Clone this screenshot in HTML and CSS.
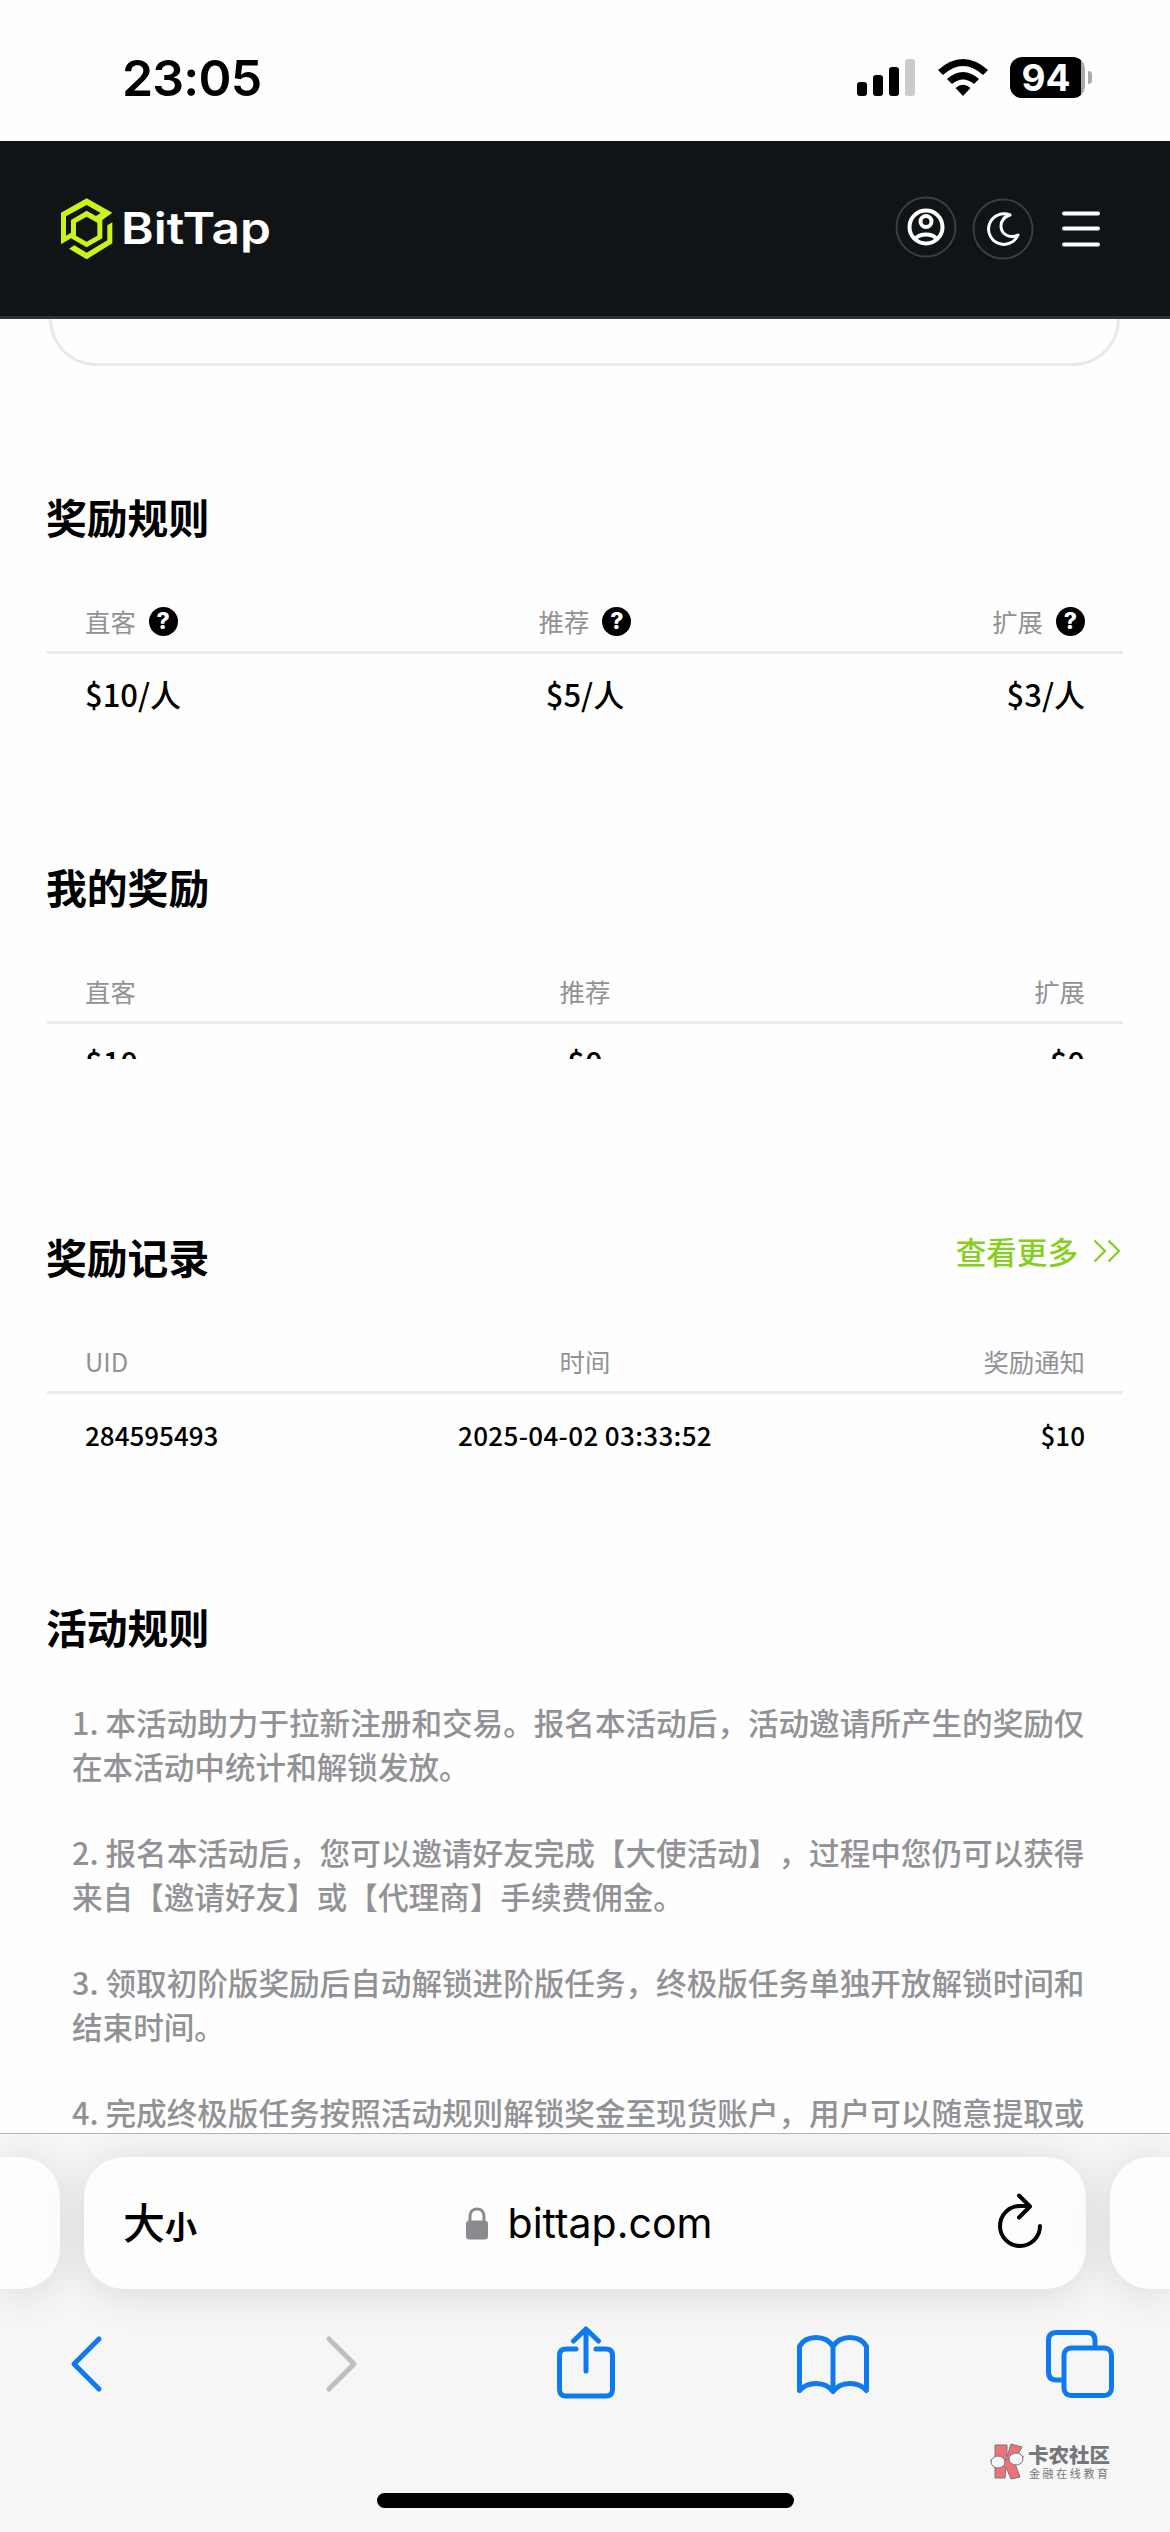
FILE: index.html
```html
<!DOCTYPE html>
<html lang="zh-CN">
<head>
  <meta charset="UTF-8">
  <meta name="viewport" content="width=device-width, initial-scale=1.0">
  <title>BitTap</title>
  <link rel="stylesheet" href="styles.css">
</head>
<body>
  <div class="status">
    <span class="time">23:05</span>
    <div class="status-icons">
      <svg class="signal" width="58" height="37" viewBox="0 0 58 37">
        <rect x="0" y="23" width="10" height="14" rx="3"/>
        <rect x="16" y="16" width="10" height="21" rx="3"/>
        <rect x="32" y="8" width="10" height="29" rx="3"/>
        <rect x="48" y="0" width="10" height="37" rx="3" fill="#cbcbcb"/>
      </svg>
      <svg class="wifi" width="50" height="37" viewBox="0 0 50 37">
        <path d="M0 11 Q25 -11 50 11 L45 16 Q25 -2 5 16Z"/>
        <path d="M9 20 Q25 6 41 20 L36 25 Q25 16 14 25Z"/>
        <path d="M17.500 29 Q25 22.500 32.500 29 L25 37Z"/>
      </svg>
      <div class="battery">94</div>
      <span class="battery-cap"></span>
    </div>
  </div>

  <header class="navbar">
    <svg class="logo" width="220" height="80" viewBox="0 0 220 80">
      <g fill="#cdf31c" transform="scale(0.3333)">
        <path d="M33 163V68L110 25L187 68L157 90V145L110 172L63 145L33 163ZM48 137L63 128V90L110 62L138 78L152 69L110 45L48 79ZM110 80L78 98V137L110 155L142 137V98Z" fill-rule="evenodd"/>
        <path d="M187 97V160L110 208L57 176L73 166L110 188L172 151V106Z"/>
      </g>
      <text x="71" y="54" textLength="150" lengthAdjust="spacingAndGlyphs">BitTap</text>
    </svg>
    <div class="nav-icons">
      <svg class="user" width="62" height="62" viewBox="0 0 62 62" fill="none" stroke="#fff" stroke-width="4">
        <circle cx="31" cy="31" r="29.500" stroke="#3b3d40" stroke-width="2"/>
        <circle cx="31" cy="31" r="16.500"/>
        <circle cx="31" cy="25.500" r="5.500"/>
        <path d="M20 43C25 37 37 37 42 43"/>
      </svg>
      <svg class="moon" width="62" height="62" viewBox="0 0 62 62" fill="none" stroke="#fff" stroke-width="3" stroke-linejoin="round">
        <circle cx="31" cy="31" r="29.500" stroke="#3b3d40" stroke-width="2"/>
        <path d="M38 17A15.300 15.300 0 1 0 46 37C37 41 29 36 29 28C29 23 32 19 38 17Z"/>
      </svg>
      <svg class="menu" width="40" height="38" viewBox="0 0 40 38" stroke="#fff" stroke-width="4" stroke-linecap="round">
        <path d="M3 3.500H37M3 18.500H37M3 34.500H37"/>
      </svg>
    </div>
  </header>

  <main class="content">
    <div class="card"></div>

    <section class="block">
      <h2>奖励规则</h2>
      <div class="row head">
        <span>直客 <i class="help">?</i></span>
        <span>推荐 <i class="help">?</i></span>
        <span>扩展 <i class="help">?</i></span>
      </div>
      <div class="row value">
        <span>$10/人</span>
        <span>$5/人</span>
        <span>$3/人</span>
      </div>
    </section>

    <section class="block">
      <h2>我的奖励</h2>
      <div class="row head">
        <span>直客</span>
        <span>推荐</span>
        <span>扩展</span>
      </div>
      <!-- only the top of the amounts shows -->
      <div class="clip">
        <div class="row value">
          <span>$10</span>
          <span>$0</span>
          <span>$0</span>
        </div>
      </div>
    </section>

    <section class="block">
      <div class="title-line">
        <h2>奖励记录</h2>
        <a class="more">查看更多
          <svg width="28" height="24" viewBox="0 0 28 24" fill="none" stroke="#86cf21" stroke-width="2.200">
            <path d="M1.500 1.500L12 12L1.500 22.500M15.500 1.500L26 12L15.500 22.500"/>
          </svg>
        </a>
      </div>
      <div class="row head">
        <span>UID</span>
        <span>时间</span>
        <span>奖励通知</span>
      </div>
      <div class="row value small">
        <span>284595493</span>
        <span class="date">2025-04-02 03:33:52</span>
        <span>$10</span>
      </div>
    </section>

    <section class="rules">
      <h2>活动规则</h2>
      <p>1. 本活动助力于拉新注册和交易。报名本活动后，活动邀请所产生的奖励仅<br>在本活动中统计和解锁发放。</p>
      <p>2. 报名本活动后，您可以邀请好友完成【大使活动】，过程中您仍可以获得<br>来自【邀请好友】或【代理商】手续费佣金。</p>
      <p>3. 领取初阶版奖励后自动解锁进阶版任务，终极版任务单独开放解锁时间和<br>结束时间。</p>
      <p>4. 完成终极版任务按照活动规则解锁奖金至现货账户，用户可以随意提取或</p>
    </section>
  </main>

  <footer class="browser">
    <div class="tabs">
      <div class="tab side"></div>
      <div class="tab address">
        <span class="size">大<small>小</small></span>
        <div class="url">
          <svg width="22" height="33" viewBox="0 0 22 33">
            <path d="M4 15V9C4 -0.500 18 -0.500 18 9V15" fill="none" stroke="#8a8a8f" stroke-width="3"/>
            <rect x="0" y="13.500" width="22" height="19" rx="3.500" fill="#8a8a8f"/>
          </svg>
          <span>bittap.com</span>
        </div>
        <svg class="reload" width="46" height="56" viewBox="0 0 46 56" fill="none" stroke="#000" stroke-width="4" stroke-linecap="round" stroke-linejoin="round">
          <path d="M43 33A20 20 0 1 1 23 13H32M22 2.500L33 13.500L22 24.500"/>
        </svg>
      </div>
      <div class="tab side"></div>
    </div>
    <div class="toolbar">
      <svg class="back" width="34" height="58" viewBox="0 0 34 58"><path d="M30 4L5 29L30 54"/></svg>
      <svg class="forward" width="34" height="58" viewBox="0 0 34 58"><path d="M4 4L29 29L4 54"/></svg>
      <svg class="share" width="58" height="76" viewBox="0 0 58 76"><path d="M19 23H9Q2.500 23 2.500 29.500V63.500Q2.500 70 9 70H49Q55.500 70 55.500 63.500V29.500Q55.500 23 49 23H39M29 45V3M16.500 15L29 3L41.500 15"/></svg>
      <svg class="book" width="72" height="62" viewBox="0 0 72 62"><path d="M36 13.500C29 1.500 9 1.500 2.500 13.500V57.500C11 48 28 48 36 58.500C44 48 61 48 69.500 57.500V13.500C63 1.500 43 1.500 36 13.500V58"/></svg>
      <svg class="pages" width="68" height="68" viewBox="0 0 68 68"><path d="M17 50H10.500Q2.500 50 2.500 42V10.500Q2.500 2.500 10.500 2.500H41Q49 2.500 49 10.500V17"/><rect x="18" y="18" width="47.500" height="47.500" rx="7"/></svg>
    </div>
    <div class="home-bar"></div>
    <div class="mark">
      <svg width="36" height="38" viewBox="0 0 36 38" stroke="#77777a" stroke-width="1">
        <path d="M6 2H18V14L22 1L33 4L25 18L31 34L22 36L17 24L16 35H6Z" fill="#ed7379"/>
        <ellipse cx="9" cy="19" rx="7" ry="6" fill="#f6f6f6"/>
        <ellipse cx="27" cy="16" rx="7" ry="6" fill="#f6f6f6"/>
        <path d="M1 17H2M15 17L20 16M33 14L35 13" fill="none"/>
      </svg>
      <div>
        <b>卡农社区</b>
        <small>金融在线教育</small>
      </div>
    </div>
  </footer>
</body>
</html>
```
FILE: styles.css
```css
* {
  box-sizing: border-box;
}
body {
  width: 1170px;
  height: 2532px;
  margin: 0;
  overflow: hidden;
  display: flex;
  flex-direction: column;
  background-color: #fefefe;
  color: #000;
  font-family: "Noto Sans CJK SC", sans-serif;
  text-spacing-trim: space-all;
}
svg {
  display: block;
  flex: none;
}

/* status bar */
.status {
  flex: none;
  height: 141px;
  padding: 14px 78px 0 122px;
  display: flex;
  align-items: center;
  justify-content: space-between;
  font-family: Inter, sans-serif;
}
.time {
  font-size: 50px;
  font-weight: 600;
  letter-spacing: -0.800px;
}
.status-icons {
  display: flex;
  align-items: center;
}
.wifi {
  margin-left: 23px;
}
.battery {
  width: 75px;
  height: 41px;
  margin-left: 22px;
  padding-right: 3px;
  border-radius: 12px;
  background: linear-gradient(to right, #000 71px, #aaa 71px);
  color: #fff;
  font-size: 37px;
  font-weight: 700;
  line-height: 41px;
  text-align: center;
}
.battery-cap {
  width: 4px;
  height: 13px;
  margin-left: 3px;
  border-radius: 0 5px 5px 0;
  background-color: #aaa;
}

/* site header */
.navbar {
  flex: none;
  height: 178px;
  padding: 0 69px 0 50px;
  display: flex;
  align-items: center;
  justify-content: space-between;
  background-color: #101416;
  border-bottom: 3px solid #313136;
}
.logo {
  margin-top: 3px;
}
.logo text {
  fill: #fff;
  font-family: Inter, sans-serif;
  font-size: 44px;
  font-weight: 600;
}
.nav-icons {
  display: flex;
  align-items: center;
}
.user {
  margin-top: -4px;
}
.moon {
  margin-left: 15px;
}
.menu {
  margin-left: 27px;
}

/* page content */
.content {
  height: 1814px;
  padding: 0 47px;
  overflow: hidden;
}
.card {
  height: 47px;
  margin: 0 3px 0 2px;
  border: 3px solid #e9e9ec;
  border-top: none;
  border-radius: 0 0 50px 50px;
}
.block {
  height: 370px;
}
.card + .block {
  margin-top: 121px;
}
h2 {
  margin: 0 0 0 -1px;
  font-size: 40.800px;
  font-weight: 700;
  line-height: 60px;
}
.row {
  display: grid;
  grid-template-columns: 1fr 1fr 1fr;
  padding: 0 38px;
}
.row span {
  display: flex;
  align-items: center;
}
.row span:nth-child(2) {
  justify-content: center;
}
.row span:nth-child(3) {
  justify-content: flex-end;
}
.head {
  height: 63px;
  margin-top: 44px;
  border-bottom: 3px solid #ebebee;
  color: #929296;
  font-size: 25.400px;
  line-height: 60px;
}
.help {
  width: 29px;
  height: 29px;
  margin-left: 13px;
  border-radius: 50%;
  background-color: #000;
  color: #fff;
  font-family: Inter, sans-serif;
  font-size: 23px;
  font-style: normal;
  font-weight: 800;
  line-height: 29px;
  text-align: center;
}
.value {
  height: 78px;
  font-size: 31px;
  font-weight: 500;
}
.value.small {
  height: 80px;
  font-size: 26px;
}
.date {
  letter-spacing: 0.350px;
}
.clip {
  height: 35px;
  overflow: hidden;
}
.clip .value {
  height: 75px;
}
.title-line {
  display: flex;
  justify-content: space-between;
}
.more {
  display: flex;
  align-items: center;
  gap: 15px;
  height: 48px;
  margin-right: 2px;
  color: #86cf21;
  font-size: 30.600px;
  font-weight: 500;
}
.rules p {
  margin: 0 -10px 43px 25px;
  color: #929296;
  font-size: 30.600px;
  font-weight: 500;
  line-height: 43.500px;
  white-space: nowrap;
}
.rules h2 {
  margin-bottom: 44px;
}

/* browser bar */
.browser {
  position: relative;
  flex: none;
  height: 399px;
  overflow: hidden;
  border-top: 1px solid #b2b2b4;
  background-color: #f6f6f6;
}
.tabs {
  display: flex;
  gap: 24px;
  height: 176px;
  padding-top: 23px;
}
.tab {
  height: 132px;
  border-radius: 40px;
  background-color: #fdfdfd;
  box-shadow: 0 4px 42px rgba(0, 0, 0, 0.12);
}
.side {
  flex: 1;
}
.side:first-child {
  border-radius: 0 40px 40px 0;
}
.side:last-child {
  border-radius: 40px 0 0 40px;
}
.address {
  width: 1002px;
  padding: 0 43px 0 39px;
  display: flex;
  align-items: center;
  justify-content: space-between;
}
.size {
  width: 120px;
  padding-bottom: 5px;
  font-size: 42px;
  font-weight: 500;
}
.size small {
  font-size: 32px;
  font-weight: 700;
}
.url {
  display: flex;
  align-items: center;
  gap: 20px;
  font-family: Inter, sans-serif;
  font-size: 41px;
}
.reload {
  margin-left: 62px;
  margin-top: -4px;
}
.toolbar {
  height: 76px;
  margin-top: 16px;
  padding-left: 69px;
  display: flex;
  align-items: center;
}
.toolbar svg {
  fill: none;
  stroke: #0f7aef;
  stroke-width: 5;
  stroke-linecap: round;
  stroke-linejoin: round;
}
.toolbar .forward {
  margin-left: 222px;
  stroke: #bfbfbf;
}
.share {
  margin-left: 198px;
}
.book {
  margin-left: 182px;
}
.pages {
  margin-left: 177px;
}
.home-bar {
  width: 417px;
  height: 15px;
  margin: 91px auto 0;
  border-radius: 8px;
  background-color: #000;
}

/* community mark over the bottom bar */
.mark {
  position: absolute;
  left: 989px;
  top: 309px;
  display: flex;
  gap: 3px;
  color: #77777a;
}
.mark b, .mark small {
  display: block;
  white-space: nowrap;
}
.mark b {
  font-size: 20.500px;
  font-weight: 900;
  line-height: 22px;
}
.mark small {
  padding-left: 1px;
  font-size: 11px;
  letter-spacing: 2.600px;
  line-height: 16px;
}
```
